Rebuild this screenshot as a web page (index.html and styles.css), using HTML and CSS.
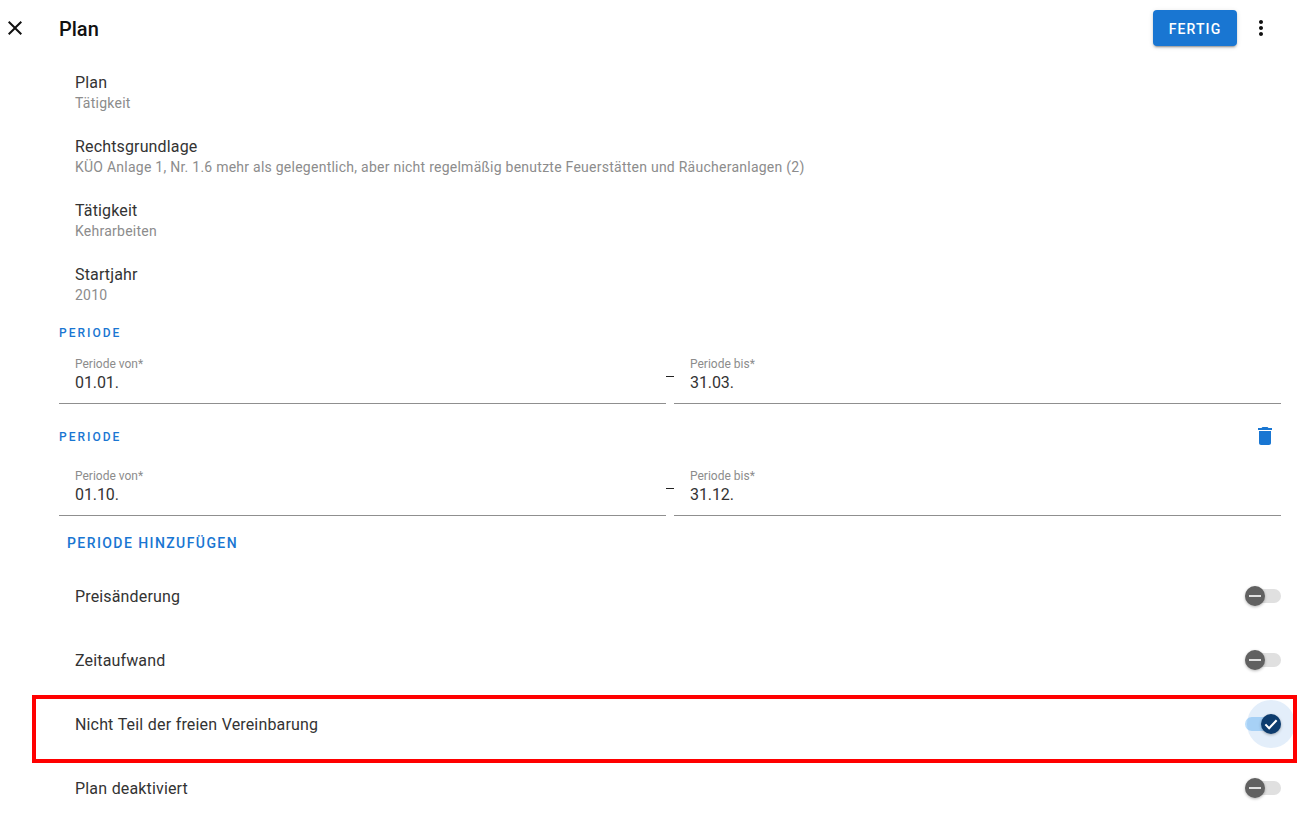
FILE: index.html
```html
<!DOCTYPE html>
<html lang="de">
<head>
    <meta charset="UTF-8">
    <meta name="viewport" content="width=device-width, initial-scale=1.0">
    <title>Plan</title>
    <link rel="stylesheet" href="styles.css">
</head>
<body>
    <!-- Kopfzeile -->
    <header class="topbar">
        <svg class="icon-close" width="24" height="24" viewBox="0 0 24 24"><path d="M19 6.41 17.59 5 12 10.59 6.41 5 5 6.41 10.59 12 5 17.59 6.41 19 12 13.41 17.59 19 19 17.59 13.41 12z"/></svg>
        <h1 class="topbar-title">Plan</h1>
        <button class="btn-done" type="button">Fertig</button>
        <svg class="icon-more" width="24" height="24" viewBox="0 0 24 24"><path d="M12 8c1.100 0 2-.9 2-2s-.9-2-2-2-2 .9-2 2 .9 2 2 2zm0 2c-1.100 0-2 .9-2 2s.9 2 2 2 2-.9 2-2-.9-2-2-2zm0 6c-1.100 0-2 .9-2 2s.9 2 2 2 2-.9 2-2-.9-2-2-2z"/></svg>
    </header>

    <main class="content">
        <!-- Stammdaten -->
        <div class="info-row">
            <div class="info-title">Plan</div>
            <div class="info-sub">Tätigkeit</div>
        </div>
        <div class="info-row">
            <div class="info-title">Rechtsgrundlage</div>
            <div class="info-sub">KÜO Anlage 1, Nr. 1.6 mehr als gelegentlich, aber nicht regelmäßig benutzte Feuerstätten und Räucheranlagen (2)</div>
        </div>
        <div class="info-row">
            <div class="info-title">Tätigkeit</div>
            <div class="info-sub">Kehrarbeiten</div>
        </div>
        <div class="info-row">
            <div class="info-title">Startjahr</div>
            <div class="info-sub">2010</div>
        </div>

        <!-- Perioden -->
        <section class="period period-first">
            <div class="period-head">
                <span class="section-label">Periode</span>
            </div>
            <div class="period-fields">
                <div class="field">
                    <div class="field-label">Periode von*</div>
                    <div class="field-value">01.01.</div>
                </div>
                <span class="field-sep"></span>
                <div class="field">
                    <div class="field-label">Periode bis*</div>
                    <div class="field-value">31.03.</div>
                </div>
            </div>
        </section>

        <section class="period period-second">
            <div class="period-head">
                <span class="section-label">Periode</span>
                <svg class="icon-trash" width="24" height="24" viewBox="0 0 24 24"><path d="M6 19c0 1.100.9 2 2 2h8c1.100 0 2-.9 2-2V7H6v12zM19 4h-3.500l-1-1h-5l-1 1H5v2h14V4z"/></svg>
            </div>
            <div class="period-fields">
                <div class="field">
                    <div class="field-label">Periode von*</div>
                    <div class="field-value">01.10.</div>
                </div>
                <span class="field-sep"></span>
                <div class="field">
                    <div class="field-label">Periode bis*</div>
                    <div class="field-value">31.12.</div>
                </div>
            </div>
        </section>

        <button class="btn-add" type="button">Periode hinzufügen</button>

        <!-- Schalter -->
        <div class="switch-row">
            <span class="switch-label">Preisänderung</span>
            <span class="switch">
                <span class="switch-thumb"><span class="thumb-minus"></span></span>
            </span>
        </div>
        <div class="switch-row">
            <span class="switch-label">Zeitaufwand</span>
            <span class="switch">
                <span class="switch-thumb"><span class="thumb-minus"></span></span>
            </span>
        </div>
        <div class="switch-row switch-row-marked">
            <span class="switch-label">Nicht Teil der freien Vereinbarung</span>
            <span class="switch switch-on">
                <span class="switch-halo"></span>
                <span class="switch-thumb">
                    <svg width="18" height="18" viewBox="0 0 24 24"><path d="M4.500 12.500 9.500 17.500 19.500 7" fill="none" stroke="#fff" stroke-width="2.800"/></svg>
                </span>
            </span>
            <div class="mark-box"></div>
        </div>
        <div class="switch-row">
            <span class="switch-label">Plan deaktiviert</span>
            <span class="switch">
                <span class="switch-thumb"><span class="thumb-minus"></span></span>
            </span>
        </div>
    </main>
</body>
</html>
```

FILE: styles.css
```css
/* Grundlage */
body {
    font-family: Roboto, "Liberation Sans", sans-serif;
    margin: 0;
    background-color: #fff;
    color: rgba(0,0,0,0.87);
    overflow: hidden;
}

/* Kopfzeile */
.topbar {
    display: flex;
    align-items: center;
    height: 56px;
    padding: 0 24px 0 3px;
}

.icon-close {
    fill: #111;
}

.topbar-title {
    font-size: 20px;
    font-weight: 500;
    line-height: 24px;
    margin: 1px 0 0 32px;
    color: #111;
    flex: 1;
}

.btn-done {
    width: 84px;
    height: 36px;
    margin: 0 12px 0 0;
    padding: 2px 0 0;
    background-color: #1976d2;
    color: #fff;
    border: none;
    border-radius: 4px;
    font-family: inherit;
    font-size: 14px;
    font-weight: 500;
    letter-spacing: 1.1px;
    text-transform: uppercase;
    box-shadow: 0 3px 1px -2px rgba(0,0,0,0.2), 0 2px 2px rgba(0,0,0,0.14), 0 1px 5px rgba(0,0,0,0.12);
}

.icon-more {
    fill: #111;
}

/* Stammdaten */
.content {
    margin-top: 1px;
}

.info-row {
    height: 64px;
    padding-left: 75px;
    box-sizing: border-box;
    padding-top: 16px;
}

.info-title {
    font-size: 16px;
    line-height: 20px;
    letter-spacing: 0.15px;
    color: #333;
}

.info-sub {
    font-size: 14px;
    line-height: 20px;
    letter-spacing: 0.25px;
    color: #8c8c8c;
}

/* Perioden */
.period {
    padding: 0 16px 0 59px;
}

.period-first {
    margin-top: 12px;
}

.period-second {
    margin-top: 21px;
}

.period-head {
    display: flex;
    align-items: center;
    justify-content: space-between;
    height: 24px;
}

.period-first .period-head {
    height: 16px;
}

.section-label {
    font-size: 12px;
    font-weight: 500;
    letter-spacing: 2px;
    text-transform: uppercase;
    color: #1976d2;
}

.icon-trash {
    fill: #1976d2;
    margin: 0 4px 2px 0;
}

.period-fields {
    display: flex;
    align-items: stretch;
}

.period-first .period-fields {
    margin-top: 13px;
}

.period-second .period-fields {
    margin-top: 17px;
}

.field {
    flex: 1;
    height: 50px;
    box-sizing: border-box;
    padding: 3px 16px 0;
    border-bottom: 1px solid #8f8f8f;
}

.field-label {
    font-size: 12px;
    line-height: 14px;
    color: #8c8c8c;
}

.field-value {
    font-size: 16px;
    line-height: 20px;
    letter-spacing: -0.1px;
    margin-top: 2px;
    color: #333;
}

.field-sep {
    width: 8px;
    height: 1px;
    margin-top: 22px;
    background-color: #222;
}

/* Periode hinzufuegen */
.btn-add {
    display: block;
    margin: 15px 0 0 59px;
    padding: 0 8px;
    height: 24px;
    background: none;
    border: none;
    font-family: inherit;
    font-size: 14px;
    font-weight: 500;
    letter-spacing: 1.42px;
    text-transform: uppercase;
    color: #1976d2;
}

/* Schalter */
.switch-row {
    position: relative;
    display: flex;
    align-items: center;
    justify-content: space-between;
    height: 64px;
    padding: 0 16px 0 75px;
}

.btn-add + .switch-row {
    margin-top: 9px;
}

.switch-label {
    font-size: 16px;
    letter-spacing: 0.15px;
    word-spacing: 0.4px;
    color: #333;
}

.switch {
    position: relative;
    width: 36px;
    height: 14px;
    border-radius: 7px;
    background-color: #e0e0e0;
}

.switch-thumb {
    position: absolute;
    left: 0;
    top: -3px;
    width: 20px;
    height: 20px;
    border-radius: 50%;
    display: flex;
    align-items: center;
    justify-content: center;
    background-color: #616161;
    box-shadow: 0 1px 3px rgba(0,0,0,0.3);
}

.thumb-minus {
    width: 12px;
    height: 2px;
    background-color: #e0e0e0;
}

.switch-on {
    background-color: #bbdefb;
}

.switch-on .switch-thumb {
    left: 16px;
    background-color: #0d3c6e;
}

.switch-halo {
    position: absolute;
    left: 2px;
    top: -17px;
    width: 48px;
    height: 48px;
    border-radius: 50%;
    background-color: rgba(25,118,210,0.12);
}

/* rote Markierung */
.mark-box {
    position: absolute;
    left: 32px;
    right: 0;
    top: 3px;
    height: 68px;
    box-sizing: border-box;
    border: 4px solid #ff0000;
}
```
